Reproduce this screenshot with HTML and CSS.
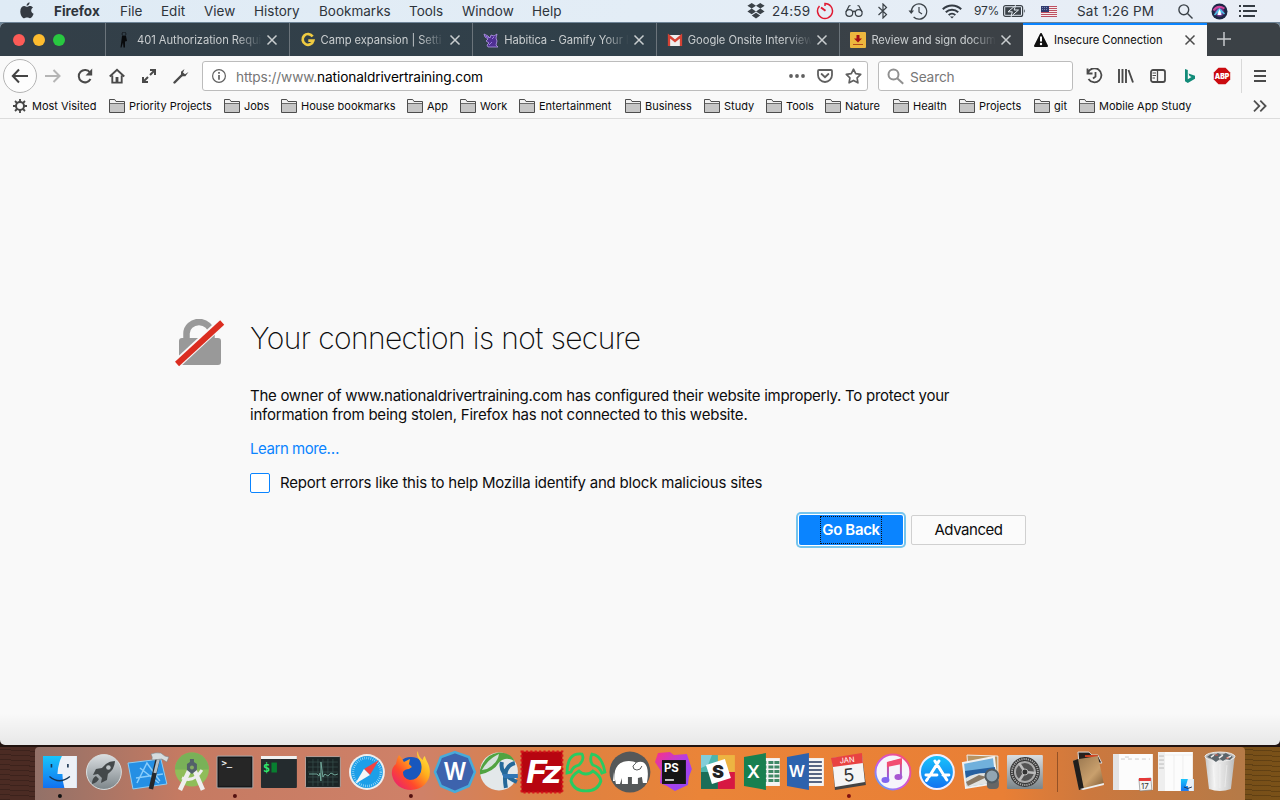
FILE: index.html
```html
<!DOCTYPE html>
<html lang="en">
<head>
<meta charset="utf-8">
<title>Insecure Connection</title>
<link rel="stylesheet" href="styles.css">
</head>
<body>
<svg width="0" height="0" class="defs" aria-hidden="true">
  <defs>
    <symbol id="close" viewBox="0 0 12 12"><path d="M1.5 1.5l9 9M10.5 1.5l-9 9" fill="none" stroke="currentColor" stroke-width="1.5"/></symbol>
    <symbol id="folder" viewBox="0 0 16 14"><path d="M.5 13.5V.5h5.2l1.3 2h8.500v11z" fill="#c6c6c6" stroke="#4d4d4d"/><path d="M1 1h4.400l1.300 2H15v1H1z" fill="#f1f1f1"/><path d="M1 4.500h14" fill="none" stroke="#6a6a6a"/></symbol>
    <linearGradient id="blueV" x2="0" y2="1"><stop stop-color="#18c5fb"/><stop offset="1" stop-color="#1271f0"/></linearGradient>
    <linearGradient id="silver" x2="0" y2="1"><stop stop-color="#d9dde0"/><stop offset="1" stop-color="#7c8589"/></linearGradient>
    <linearGradient id="fox" x1="1" x2="0" y2="1"><stop stop-color="#fff24a"/><stop offset=".35" stop-color="#ffb01c"/><stop offset=".65" stop-color="#ff4a2b"/><stop offset="1" stop-color="#e31587"/></linearGradient>
    <linearGradient id="note" x2="0" y2="1"><stop stop-color="#fb4568"/><stop offset="1" stop-color="#7d62f6"/></linearGradient>
    <linearGradient id="ring" x1="1" x2="0" y2="1"><stop stop-color="#ff4b66"/><stop offset=".6" stop-color="#c65bea"/><stop offset="1" stop-color="#41b5ff"/></linearGradient>
    <linearGradient id="storm" x2="1" y2="1"><stop stop-color="#fc3183"/><stop offset=".5" stop-color="#b23ee8"/><stop offset="1" stop-color="#8b49f8"/></linearGradient>
    <linearGradient id="leather" x2="1" y2="1"><stop stop-color="#93714b"/><stop offset=".6" stop-color="#c9a06d"/><stop offset="1" stop-color="#79542f"/></linearGradient>
    <linearGradient id="bin" x2="1"><stop stop-color="#c8c8c8"/><stop offset=".3" stop-color="#f2f2f2"/><stop offset=".7" stop-color="#dadada"/><stop offset="1" stop-color="#b9b9b9"/></linearGradient>
    <radialGradient id="siri"><stop stop-color="#fff"/><stop offset=".3" stop-color="#62bbea"/><stop offset=".6" stop-color="#7c3f9e"/><stop offset="1" stop-color="#17263e"/></radialGradient>
  </defs>
</svg>

<header class="menubar">
  <svg class="apple" viewBox="0 0 14 17"><path d="M9.600.300c.100 1.800-1.300 3.500-3 3.500C6.400 2.200 7.900.500 9.600.300zM7 4.800c.800 0 1.500-.800 3-.800 1.300 0 2.400.700 3 1.600-2.700 1.700-2.200 5.100.600 6.200-.6 1.900-2.100 4.400-3.600 4.400-1.100 0-1.500-.700-2.900-.700s-1.900.700-2.900.700C2.400 16.200.300 12.900.300 9.400c0-3.600 2.100-5.400 4-5.400 1.200 0 2 .800 2.700.800z" fill="#343a42"/></svg>
  <nav class="menus"><b>Firefox</b><span>File</span><span>Edit</span><span>View</span><span>History</span><span>Bookmarks</span><span>Tools</span><span>Window</span><span>Help</span></nav>
  <div class="status">
    <svg width="18" height="16" viewBox="0 0 18 16" fill="#3b4248"><path d="M4.700 0L9 2.800 4.700 5.600.4 2.800zM13.300 0l4.300 2.800-4.300 2.800L9 2.800zM4.700 5.600L9 8.400l-4.300 2.800L.4 8.400zM13.300 5.600l4.300 2.800-4.300 2.800L9 8.400zM9 9.700l4.200 2.800L9 15.500l-4.200-3z"/></svg>
    <span class="timer">24:59</span>
    <svg width="18" height="18" viewBox="0 0 18 18" fill="none" stroke="#e01932" stroke-width="1.500"><path d="M9 4V1.500A7.500 7.500 0 1 1 3.500 3.900"/><path d="M5 5.500l4.500 3.300" stroke-width="2"/></svg>
    <svg width="18" height="14" viewBox="0 0 18 14" fill="none" stroke="#3b4248" stroke-width="1.200"><circle cx="4.300" cy="9" r="3.400"/><circle cx="13.700" cy="9" r="3.400"/><path d="M7.500 8q1.500-1.500 3 0M1 8l3-6 1.500-.500M17 8l-3-6-1.500-.500"/></svg>
    <svg width="12" height="16" viewBox="0 0 12 16" fill="none" stroke="#3b4248" stroke-width="1.200"><path d="M1.500 4l8 7.500L6 15V1l3.500 3.500L1.500 12"/></svg>
    <svg width="20" height="17" viewBox="0 0 20 17" fill="none" stroke="#3b4248" stroke-width="1.200"><path d="M3.300 8.500a7.700 7.700 0 1 1 2.300 5.500M11 4v5l3 2"/><path d="M.5 7.500h5.500L3.200 11z" fill="#3b4248" stroke="none"/></svg>
    <svg width="20" height="15" viewBox="0 0 20 15" fill="none" stroke="#343b43" stroke-width="2"><path d="M.8 5.200a13 13 0 0 1 18.400 0M3.800 8.300a8.800 8.800 0 0 1 12.400 0M6.700 11.100a4.700 4.700 0 0 1 6.600 0"/><path d="M8 12.500h4l-2 2z" fill="#343b43" stroke="none"/></svg>
    <span class="percent">97%</span>
    <svg width="23" height="12" viewBox="0 0 23 12"><rect x=".6" y=".6" width="19" height="10.800" rx="2" fill="none" stroke="#3b4248" stroke-width="1.200"/><rect x="2.200" y="2.200" width="15.800" height="7.600" fill="#3b4248"/><path d="M21 4q1.800 2 0 4" fill="#3b4248"/><path d="M12.500.5L5 6.800h4.300L8 11.500 15.500 5h-4.300z" fill="#3b4248" stroke="#e8eff6"/></svg>
    <svg width="16" height="11" viewBox="0 0 16 11"><path fill="#f4eef0" d="M0 0h16v11H0z"/><path d="M0 .5h16M0 2.500h16M0 4.500h16M0 6.500h16M0 8.500h16M0 10.500h16" stroke="#bd5162"/><path fill="#303b70" d="M0 0h8v6H0z"/><path d="M1 1.500h6M1 3.500h6" stroke="#8089ad" stroke-dasharray="1 1"/></svg>
    <span class="clock">Sat 1:26 PM</span>
    <svg width="15" height="15" viewBox="0 0 15 15" fill="none" stroke="#3b4248" stroke-width="1.400"><circle cx="5.800" cy="5.800" r="4.900"/><path d="M9.500 9.500l5 5"/></svg>
    <svg width="17" height="17" viewBox="0 0 17 17"><circle cx="8.500" cy="8.500" r="8" fill="#1c2746"/><circle cx="8.500" cy="9" r="5.500" fill="url(#siri)"/><path d="M2.500 7.500q4-6 11-2" fill="none" stroke="#d0459d" stroke-width="2"/><path d="M3.500 12l5-6 5 5" fill="none" stroke="#4cc6ea" stroke-width="1.500"/><path d="M8.500 6l2 6h-4z" fill="#fff"/></svg>
    <svg width="18" height="12" viewBox="0 0 18 12" stroke="#343b43" stroke-width="2"><path d="M0 1h2M4 1h12M0 6h2M4 6h14M0 11h2M4 11h12"/></svg>
  </div>
</header>

<main class="window">
  <div class="tabs">
    <div class="lights"><i class="red"></i><i class="amber"></i><i class="green"></i></div>
    <div class="tab"><svg class="fav" viewBox="0 0 16 16"><circle cx="8" cy="2" r="2" fill="none" stroke="#161c21"/><path d="M6 4h4l1 5-2 .5v6H7.500l-.5-5-1.500 5H4.500z" fill="#080a0c"/></svg><span class="label">401 Authorization Requi</span><svg class="x"><use href="#close"/></svg></div>
    <div class="tab"><svg class="fav" viewBox="0 0 16 16"><path d="M12.600 4.500A5.400 5.400 0 1 0 13.300 8.700H8.300" fill="none" stroke="#efcb42" stroke-width="2.700"/></svg><span class="label">Camp expansion | Setti</span><svg class="x"><use href="#close"/></svg></div>
    <div class="tab"><svg class="fav" viewBox="0 0 16 16"><path d="M1 2l4 2 2 2 1-3 3 1 3-2-1 4 1 3-1 4 2 2H5l-1-2 2-2-3-2 2-2-3-2z" fill="#4f3093" stroke="#b59be8" stroke-width=".8"/><path d="M2.500 4l3.500 2M6 13l3-3M9 7l2-2" stroke="#9d7be0"/></svg><span class="label">Habitica - Gamify Your l</span><svg class="x"><use href="#close"/></svg></div>
    <div class="tab"><svg class="fav" viewBox="0 0 16 16"><path fill="#eee" d="M1 3h14v11H1z"/><path d="M2 14V4l6 5 6-5v10" fill="none" stroke="#d54234" stroke-width="2.300"/></svg><span class="label">Google Onsite Interview</span><svg class="x"><use href="#close"/></svg></div>
    <div class="tab"><svg class="fav" viewBox="0 0 16 16"><rect width="16" height="16" rx="1" fill="#edb73e"/><path d="M6.500 3h3v3.500H12L8 10.500l-4-4h2.500z" fill="#a40f16"/><path d="M3 12.500h10" stroke="#b34b1d" stroke-width="1"/></svg><span class="label">Review and sign docum</span><svg class="x"><use href="#close"/></svg></div>
    <div class="tab active"><svg class="fav" viewBox="0 0 16 16"><path d="M8 2l6 12H2z" fill="#111" stroke="#111" stroke-width="2" stroke-linejoin="round"/><path d="M8 4.500v5" stroke="#fff" stroke-width="2"/><circle cx="8" cy="12" r="1.200" fill="#fff"/></svg><span class="label">Insecure Connection</span><svg class="x"><use href="#close"/></svg></div>
    <svg class="plus" viewBox="0 0 14 14"><path d="M7 0v14M0 7h14" stroke="#c6c9cc" stroke-width="1.500"/></svg>
  </div>

  <div class="toolbar">
    <div class="back"><svg width="18" height="16" viewBox="0 0 18 16" fill="none" stroke="#444" stroke-width="2"><path d="M17 8H2M8 1.500L1.800 8 8 14.500"/></svg></div>
    <div class="tools-left">
      <svg width="16" height="14" viewBox="0 0 16 14" fill="none" stroke="#b5b5b5" stroke-width="2"><path d="M0 7h14M8.500 1l6 6-6 6"/></svg>
      <svg width="16" height="16" viewBox="0 0 16 16" fill="none" stroke="#4a4a4a" stroke-width="2"><path d="M13 4.500A6.200 6.200 0 1 0 13.500 11"/><path d="M15.200.5v7H8.500z" fill="#4a4a4a" stroke="none"/></svg>
      <svg width="16" height="16" viewBox="0 0 17 16" fill="none" stroke="#4a4a4a" stroke-width="2"><path d="M.8 8.500l7.700-7 7.700 7M3.500 7.500V15h10V7.500"/><path d="M7 9h3v6H7z" fill="#4a4a4a" stroke="none"/></svg>
      <svg width="16" height="16" viewBox="0 0 16 16" fill="none" stroke="#4a4a4a" stroke-width="2"><path d="M9 7l5-5M7 9l-5 5M9 2h5v5M2 9v5h5"/></svg>
      <svg width="16" height="16" viewBox="0 0 16 16"><path d="M1.500 14.500L9 7" stroke="#4a4a4a" stroke-width="2.400" stroke-linecap="round"/><path d="M11.500 1L8 3.800v4.400h4.400L15.500 4 12 6.200 10 4.500z" fill="#4a4a4a"/></svg>
    </div>
    <div class="urlbar">
      <svg width="14" height="14" viewBox="0 0 14 14" fill="none" stroke="#606060"><circle cx="7" cy="7" r="6.400" stroke-width="1.200"/><path d="M7 6v4.700M7 3v1.700" stroke-width="1.700"/></svg>
      <span class="url"><span>https://www.</span>nationaldrivertraining.com</span>
      <svg width="16" height="4" viewBox="0 0 16 4" fill="#606060"><circle cx="2" cy="2" r="1.900"/><circle cx="8" cy="2" r="1.900"/><circle cx="14" cy="2" r="1.900"/></svg>
      <svg width="16" height="14" viewBox="0 0 16 14" fill="none" stroke="#606060" stroke-width="1.800"><path d="M2 1h12q1 0 1 1v4a7 7 0 0 1-14 0V2q0-1 1-1z"/><path d="M4.600 5L8 8.200 11.400 5" stroke-linecap="round"/></svg>
      <svg width="17" height="16" viewBox="0 0 17 16" fill="none" stroke="#606060" stroke-width="1.700" stroke-linejoin="round"><path d="M8.500 1.200l2.200 4.500 5 .7-3.600 3.400.8 5-4.400-2.400-4.400 2.400.8-5L1.300 6.400l5-.7z"/></svg>
    </div>
    <div class="searchbar"><svg width="17" height="17" viewBox="0 0 17 17" fill="none" stroke="#909090" stroke-width="2"><circle cx="6.500" cy="6.500" r="5"/><path d="M10.200 10.200l6 5.500"/></svg><span>Search</span></div>
    <div class="tools-right">
      <svg width="17" height="16" viewBox="0 0 17 16" fill="none" stroke="#4a4a4a" stroke-width="1.800"><path d="M2 4.500A7 7 0 1 1 2.500 11M9.500 4v4.500L7 10.500M1.500.500v5h5"/></svg>
      <svg width="16" height="14" viewBox="0 0 16 14" stroke="#4a4a4a" stroke-width="1.900"><path d="M1 0v14M4.500 0v14M8 0v14M10.500 1l4.500 12.500"/></svg>
      <svg width="16" height="14" viewBox="0 0 16 14" fill="none" stroke="#4a4a4a" stroke-width="1.800"><rect x="1" y="1" width="14" height="12" rx="2"/><path d="M7.500 1v12" stroke-width="1.300"/><path d="M2.500 4h3.500M2.500 6.500h3.500M2.500 9h2.500" stroke-width="1"/></svg>
      <svg width="12" height="14" viewBox="0 0 12 14" fill="#128b79"><path d="M1 0l2.800 1v9.300L7.500 8 5.500 7 4.500 4.400 11 6.700v3L3.800 14 1 12.300z"/></svg>
      <svg class="abp" width="18" height="18" viewBox="0 0 18 18"><path d="M5.500.8h7l4.700 4.700v7l-4.700 4.700h-7L.8 12.500v-7z" fill="#cb0b10"/><text x="9" y="11.700" font-size="7.400" font-weight="900" textLength="14.500" lengthAdjust="spacingAndGlyphs" text-anchor="middle" fill="#fff">ABP</text></svg>
      <i class="rule"></i>
      <svg width="12" height="12" viewBox="0 0 12 12" stroke="#4a4a4a" stroke-width="2"><path d="M0 1h12M0 6h12M0 11h12"/></svg>
    </div>
  </div>

  <div class="bookmarks">
    <span><svg class="gear" viewBox="0 0 16 16" fill="none" stroke="#474747"><circle cx="8" cy="8" r="4" stroke-width="2"/><path d="M8 1v3M8 12v3M1 8h3M12 8h3M3 3l2 2M11 11l2 2M13 3l-2 2M5 11l-2 2" stroke-width="1.800"/></svg>Most Visited</span>
    <span><svg><use href="#folder"/></svg>Priority Projects</span><span><svg><use href="#folder"/></svg>Jobs</span><span><svg><use href="#folder"/></svg>House bookmarks</span><span><svg><use href="#folder"/></svg>App</span><span><svg><use href="#folder"/></svg>Work</span><span><svg><use href="#folder"/></svg>Entertainment</span><span><svg><use href="#folder"/></svg>Business</span><span><svg><use href="#folder"/></svg>Study</span><span><svg><use href="#folder"/></svg>Tools</span><span><svg><use href="#folder"/></svg>Nature</span><span><svg><use href="#folder"/></svg>Health</span><span><svg><use href="#folder"/></svg>Projects</span><span><svg><use href="#folder"/></svg>git</span><span><svg><use href="#folder"/></svg>Mobile App Study</span>
    <svg class="more" viewBox="0 0 14 12" fill="none" stroke="#505050" stroke-width="1.800"><path d="M1 .7L6.300 6 1 11.300M7.300.7L12.600 6l-5.300 5.300"/></svg>
  </div>

  <section class="page">
    <svg class="lock" viewBox="0 0 50 50"><path d="M11.500 21v-6.500a12.500 11.500 0 0 1 25 0V21" fill="none" stroke="#999" stroke-width="6.500"/><rect x="4" y="19" width="42" height="27" rx="3" fill="#999"/><path d="M0 46.500L48 2" stroke="#f9f9f9" stroke-width="9"/><path d="M2 45L47.200 3.500" stroke="#db2d20" stroke-width="6"/></svg>
    <div class="message">
      <h1>Your connection is not secure</h1>
      <p class="copy"><span>The owner of www.nationaldrivertraining.com has configured their website improperly. To protect your</span><br>information from being stolen, Firefox has not connected to this website.</p>
      <a class="learn">Learn more…</a>
      <label class="report"><i></i>Report errors like this to help Mozilla identify and block malicious sites</label>
      <div class="actions"><button class="primary"><span>Go Back</span></button><button class="secondary">Advanced</button></div>
    </div>
  </section>
</main>

<footer class="desktop">
  <div class="dock">
    <svg viewBox="0 0 44 50"><path fill="url(#blueV)" d="M5 6h34v32H5z"/><path d="M24 6q-4 8-4.500 18h5q0 8 2 14H39V6z" fill="#edf1f7"/><path d="M13.500 14v3.500M30 14v3.500" stroke="#16334f" stroke-width="1.600"/><path d="M11.500 26.500q10 8.500 20.500 0" fill="none" stroke="#16334f" stroke-width="1.300"/><circle cx="22" cy="46" r="2" fill="#111"/></svg>
    <svg viewBox="0 0 44 50"><circle cx="22" cy="22" r="17.500" fill="url(#silver)" stroke="#d9dedf"/><path d="M33 11q-8 0-13 7l-6 1-3 6 5-1 4 4-1 5 6-3 1-6q7-5 7-13zM14 26q-4 2-4 8 5-1 7-5z" fill="#43484a"/><circle cx="26.500" cy="17.500" r="2.300" fill="#bdc3c6"/></svg>
    <svg viewBox="0 0 44 50"><path d="M2 13l33-4 6 25-34 5z" fill="#258fe4" stroke="#8bcdf5"/><path d="M11 33l10-20 13 18M10 28l27-4M14 18l19 15" fill="none" stroke="#89cdfb" stroke-width="1.500"/><path d="M32 8l-7 31" stroke="#24282d" stroke-width="4.500"/><path d="M33 7l-4 16" stroke="#b4bec5" stroke-width="3"/><path d="M25 4q5-2 10-1l4 3 4 1-2 5-5-3-10 1q1-3-1-6z" fill="#d5dcdf" stroke="#7a8388" stroke-width=".6"/></svg>
    <svg viewBox="0 0 44 50"><circle cx="22" cy="19.500" r="17" fill="#8fbd59"/><path d="M5 19.500a17 17 0 0 1 34 0z" fill="#79b158"/><path d="M20 19L10 40M24 19l9 21" stroke="#eee" stroke-width="4.500"/><path d="M12 28q12 5 20-8" fill="none" stroke="#eee" stroke-width="3"/><path d="M20 9h4v3l3 2v6l-5 4-5-4v-6l3-2z" fill="#53616a"/><circle cx="22" cy="17.500" r="2" fill="#87aa62"/></svg>
    <svg viewBox="0 0 44 50"><rect x="4" y="6" width="36" height="32" rx="1" fill="#17191b" stroke="#a9a9a9"/><rect x="6" y="8" width="32" height="28" fill="#262626"/><text x="8.500" y="16" class="mono" font-size="9" font-weight="700" fill="#eee">&gt;_</text><circle cx="22" cy="46" r="2" fill="#54100f"/></svg>
    <svg viewBox="0 0 44 50"><rect x="4" y="6" width="36" height="32" rx="1" fill="#242b2e"/><path d="M4 6h36v3H4z" fill="#f1f1f1"/><text x="6" y="22" class="mono" font-size="12" font-weight="700" fill="#30e96c">$</text><path fill="#087f30" d="M14.500 12.500h5.500v10h-5.500z"/></svg>
    <svg viewBox="0 0 44 50"><rect x="4.500" y="6.500" width="35" height="31" rx="1" fill="#1b2526" stroke="#b7a09a"/><path d="M7 12h30M7 17h30M7 22h30M7 27h30M7 32h30M12 9v27M17 9v27M22 9v27M27 9v27M32 9v27" stroke="#38504e" stroke-width=".7"/><path d="M8 24h8l2 2 1-3 1 8V12l2 15 2-3 3 2 3-3 4 2 3-1" fill="none" stroke="#71a99b"/></svg>
    <svg viewBox="0 0 44 50"><circle cx="22" cy="22" r="18" fill="#eee"/><circle cx="22" cy="22" r="16" fill="#1d9fe8"/><circle cx="22" cy="22" r="14" fill="none" stroke="#b5e4fa" stroke-width="2.500" stroke-dasharray=".6 1.500"/><path d="M34 10L19 19l6 6z" fill="#f34242"/><path d="M10 34l9-15 6 6z" fill="#f5f5f5"/></svg>
    <svg viewBox="0 0 44 50"><circle cx="22" cy="22" r="15" fill="#1857bd"/><path d="M29 1q-2 4 1 8 4 5 2 13-3 8-11 8-7-1-7-8 2-3 6-3l3-2-3-3 1-5-6 3q-2-4-5-7-2 3-3 9Q2 18 3 25c2 10 10 15 19 15 11 0 19-8 19-18 0-8-4-11-5-16-1 1-2 2-2 4-3-2-5-5-5-9z" fill="url(#fox)"/><circle cx="22" cy="46" r="2" fill="#54100f"/></svg>
    <svg viewBox="0 0 44 50"><path d="M22 2l14 5 6 15-6 14-14 6-14-6-6-14 6-15z" fill="#3d63ad" stroke="#49abd9" stroke-width="2.500"/><text x="22" y="30.500" font-size="24" font-weight="600" textLength="23" lengthAdjust="spacingAndGlyphs" text-anchor="middle" fill="#fff">W</text></svg>
    <svg viewBox="0 0 44 50"><circle cx="22" cy="21.500" r="19" fill="#e3e8ea"/><path d="M3 20Q8 4 22 2.500q12 0 16 9-9-6-16 1-5 9-19 12z" fill="#51a341"/><path d="M22 4q-1 9-12 15l-5 1q6-11 17-16z" fill="#d5e2dc"/><path d="M25 12q-3 12 15 20M38 13q-13 3-9 25" fill="none" stroke="#25699a" stroke-width="4"/><path d="M25 24h16v4H27z" fill="#3176b4"/></svg>
    <svg viewBox="0 0 44 50"><rect x="1.500" y="1.500" width="41" height="41" fill="#b70510"/><rect x="1.500" y="1.500" width="41" height="41" fill="none" stroke="#d6151b" stroke-width="2" stroke-dasharray="2.200 2.200"/><text x="6" y="33" font-size="31" font-weight="700" font-style="italic" letter-spacing="-3" textLength="33" lengthAdjust="spacingAndGlyphs" fill="#fff">Fz</text></svg>
    <svg viewBox="0 0 44 50" fill="none" stroke="#28cb61" stroke-width="2.800"><path d="M15 21q-7 4-8 10 3 10 15 10t15-10q-1-6-8-10-3 3-7 3t-7-3zM3 23C3 9 8 3 18 4q3 5-3 11-6 1-8 7zM28 4q10 1 13 18l-3 1q-2-6-9-8-4-5-1-11z"/></svg>
    <svg viewBox="0 0 44 50"><circle cx="22" cy="22" r="20.500" fill="#555859"/><path d="M8 34q-2-7-1-13 3-10 14-10 5 0 7 2 8-4 11 4 2 6 0 16h-4l-1-6-4 1v6h-6v-7h-4v7h-6v-6l-2 6zM6 22l-1 9h2z" fill="#fff"/><path d="M28 13l-3 3q0 4 4 4t5-4" fill="none" stroke="#555859"/></svg>
    <svg viewBox="0 0 44 50"><path d="M6 3l12-1 4 3 13-1 3 9 2 6-3 8-1 8-13 6-8-5-7-3 1-12-6-9z" fill="url(#storm)"/><path fill="#151515" d="M10 10h24v24H10z"/><text x="12" y="22" font-size="11.500" font-weight="700" fill="#fff">PS</text><path d="M13 30h9" stroke="#fff" stroke-width="1.500"/></svg>
    <svg viewBox="0 0 44 50"><path d="M5 5h17v17H5z" fill="#4cb5ad"/><path d="M22 5h17v17H22z" fill="#edb442"/><path d="M5 22h17v17H5z" fill="#1a6e58"/><path d="M22 22h17v17H22z" fill="#d71842"/><path d="M5 5h11l-4 10-7 3z" fill="#82cdd9"/><path d="M10 15l19-6 6 19-19 6z" fill="#fff"/><text x="22" y="28" font-size="18" font-weight="900" text-anchor="middle" fill="#222">S</text></svg>
    <svg viewBox="0 0 44 50"><path d="M20 8h20v28H20z" fill="#f4f4f4"/><path d="M24 11v22M31 11v22M37 11v22" stroke="#3e8865" stroke-width="5" stroke-dasharray="3 1.500"/><path d="M4 7l22-4v37L4 36z" fill="#178050"/><text x="13.500" y="28" font-size="18" font-weight="600" text-anchor="middle" fill="#fff">X</text></svg>
    <svg viewBox="0 0 44 50"><path d="M20 8h20v28H20z" fill="#f4f4f4"/><path d="M24 12h14M24 16h14M24 20h14M24 24h14M24 28h14M24 32h14" stroke="#566583" stroke-width="2"/><path d="M3 7l22-4v37L3 36z" fill="#2d62ad"/><text x="13" y="27" font-size="16" font-weight="600" text-anchor="middle" fill="#fff">W</text></svg>
    <svg viewBox="0 0 44 50"><path d="M5 8l30-4 4 31-31 5z" fill="#444"/><path d="M5 8l30-4 3 28-30 5z" fill="#f5f5f5"/><path d="M4 8l31-5 1 10-30 4z" fill="#e94242"/><text transform="translate(13 13.500) rotate(-6)" font-size="7.500" fill="#fff">JAN</text><text transform="translate(17 32) rotate(-6)" font-size="18" fill="#333">5</text><circle cx="22" cy="46" r="2" fill="#801010"/></svg>
    <svg viewBox="0 0 44 50"><circle cx="22" cy="22" r="17.500" fill="#f6f5fb" stroke="url(#ring)" stroke-width="2"/><path d="M17 30V13l13-3v17" fill="none" stroke="url(#note)" stroke-width="2"/><path d="M16 12l15-4v6l-15 3z" fill="#f24e72"/><ellipse cx="14.500" cy="30" rx="4" ry="3" fill="#8166ef"/><ellipse cx="27.500" cy="27" rx="4" ry="3" fill="#a757d2"/></svg>
    <svg viewBox="0 0 44 50"><circle cx="22" cy="22" r="17" fill="url(#blueV)" stroke="#eef" stroke-width="2"/><path d="M20 11l12 19M24 11L14 27M11 25h11M28 25h6M12.500 29l-1 1.500" fill="none" stroke="#fff" stroke-width="3" stroke-linecap="round"/></svg>
    <svg viewBox="0 0 44 50"><path d="M8 5l31 1v27H10z" fill="#b89462" stroke="#eee"/><path d="M4 13l31-6 3 26-31 5z" fill="#70b0dc" stroke="#f0f0f0" stroke-width="2"/><path d="M6 21l30-4 1 7-30 4z" fill="#2760a0"/><path d="M7 28q12-7 30-4l1 8-30 5z" fill="#e2e3e1"/><path d="M7 32l13-7 8 2-19 9z" fill="#887864"/><rect x="28" y="28" width="12" height="11" rx="4" fill="#666"/><circle cx="33" cy="26" r="6.500" fill="#92a5b2" stroke="#505a60" stroke-width="2"/></svg>
    <svg viewBox="0 0 44 50"><rect x="4" y="5" width="36" height="34" rx="1" fill="url(#silver)"/><circle cx="22" cy="22" r="15" fill="#373737"/><circle cx="22" cy="22" r="13" fill="none" stroke="#aaa" stroke-width="2" stroke-dasharray="1.200 1"/><circle cx="22" cy="22" r="10" fill="#545454" stroke="#aaa" stroke-width="2"/><path d="M22 22l11 1M22 22l-6-9M22 22l-6 9" stroke="#bbb" stroke-width="2.500"/><circle cx="22" cy="22" r="3" fill="#333" stroke="#bbb"/></svg>
    <i class="divider"></i>
    <svg viewBox="0 0 44 50"><path d="M11 2h11l3 3h6l4 8H12z" fill="#28201d" stroke="#ddd"/><path d="M18 6h13" stroke="#d1411f" stroke-width="2"/><path d="M6 10l25-4 6 28-25 6z" fill="url(#leather)"/><path d="M6 11l5-2 6 30-5 1z" fill="#211e1c"/><path d="M13 39l24-6v2l-21 5z" fill="#eee"/></svg>
    <svg viewBox="0 0 44 50"><path fill="#fcfcfc" d="M2 4h40v36H2z"/><path fill="#e3e3e3" d="M2 4h6v36H2z"/><path d="M10 9h29M14 7h7" stroke="#ccc" stroke-dasharray="4 3"/><path d="M28 29l12-1 1 12-12 1z" fill="#f4f4f4" stroke="#777" stroke-width=".6"/><path fill="#e53939" d="M28 28h12v3H28z"/><text x="30" y="39" font-size="8" fill="#333">17</text></svg>
    <svg viewBox="0 0 44 50"><path fill="#fcfcfc" d="M4 2h35v39H4z"/><path fill="#eee" d="M4 2h7v39H4z"/><path d="M5 6h5M5 10h5M5 14h5M5 18h5" stroke="#bbb"/><path d="M11 5h28M20 5v35M29 5v35" stroke="#eee"/><path fill="url(#blueV)" d="M27 29h13v12H27z"/><path d="M34 29l-2 7h2l1 5h5V29z" fill="#e9f0f7"/><path d="M30 37q4 3 8 0" fill="none" stroke="#235"/></svg>
    <svg viewBox="0 0 44 50"><path d="M7 5h30l-4 34q-11 4-22 0z" fill="url(#bin)"/><ellipse cx="22" cy="6.500" rx="15" ry="4.500" fill="#bbb" stroke="#eee"/><path d="M9 7l4-3 4 1 3-2 4 2 4-2 7 4-3 3-4-1-3 2-3-2-4 3-4-3z" fill="#5b656b"/><path d="M13 7l3-2M21 8l4-3M29 8l4-2" stroke="#eee" stroke-width="1.500"/><path d="M17 5h3M28 8h3" stroke="#d85a45"/><path d="M15 15l2 22M22 14v24M29 15l-2 22" stroke="#fff" stroke-opacity=".4"/></svg>
  </div>
</footer>
</body>
</html>
```

FILE: styles.css
```css
* { box-sizing: border-box; }
body {
  margin: 0;
  width: 1280px;
  height: 800px;
  overflow: hidden;
  display: flex;
  flex-direction: column;
  font-family: Inter, "Liberation Sans", sans-serif;
  background: linear-gradient(#6e8497 0 30px, #21130f 30px);
}
svg { display: block; flex: none; }
svg text { font-family: Inter, sans-serif; }
svg .mono { font-family: "DejaVu Sans Mono", monospace; }
.defs { position: absolute; }

.menubar {
  height: 22px;
  flex: none;
  display: flex;
  align-items: center;
  padding-left: 20px;
  background: linear-gradient(90deg, #dfebf5, #e3edf6 50%, #e9eef6);
  color: #2e343b;
  font-size: 13.5px;
  line-height: 22px;
  white-space: nowrap;
}
.apple { width: 14px; height: 17px; margin-right: 20px; margin-bottom: 2px; }
.menus { display: grid; grid-template-columns: 66px 41px 43px 50px 65px 90px 53px 70px 40px; }
.status {
  margin-left: 175px;
  display: grid;
  align-items: center;
  grid-template-columns: 25px 44px 29px 32px 31px 34px 32px 29px 38px 36px 101px 33px 28px 18px;
}
.timer { letter-spacing: .2px; }
.percent { font-size: 12px; letter-spacing: -.2px; }
.clock { letter-spacing: .2px; }

.window {
  margin-top: 1px;
  height: 722px;
  flex: none;
  display: flex;
  flex-direction: column;
  border-radius: 5px;
  overflow: hidden;
  background: #f9f9f9;
}
.tabs { height: 33px; flex: none; display: flex; background: linear-gradient(90deg, #333f48, #30404a 50%, #3c4146 70%, #3b4146); }
.lights { width: 105px; display: flex; align-items: center; gap: 8px; padding: 1px 0 0 13px; }
.lights i { width: 12px; height: 12px; border-radius: 50%; }
.red { background: #fc5b57; }
.amber { background: #fdbc2f; }
.green { background: #28c840; }
.tab {
  width: 183.6px;
  flex: none;
  display: flex;
  align-items: center;
  padding: 1px 11px 0 10px;
  border-left: 1px solid #6b747b;
  color: #c9cdcf;
}
.fav { width: 16px; height: 16px; margin-right: 5px; }
.label {
  flex: 1;
  min-width: 0;
  overflow: hidden;
  white-space: nowrap;
  font-size: 11.2px;
  letter-spacing: -.05px;
  -webkit-mask-image: linear-gradient(90deg, #000 80%, transparent);
  mask-image: linear-gradient(90deg, #000 80%, transparent);
}
.x { width: 12px; height: 12px; margin-left: 4px; }
.tab.active { background: #f9f9f9; color: #0c0c0d; border-left: 0; border-top: 2px solid #0a84ff; padding: 0 11px 1px 10px; }
.tab.active .label { -webkit-mask-image: none; mask-image: none; }
.tab.active .x { color: #4c4c4c; }
.plus { width: 14px; height: 14px; margin: 9px 0 0 10px; }

.toolbar { height: 40px; flex: none; display: flex; align-items: center; padding-left: 3px; }
.back { width: 34px; height: 34px; border: 1px solid #b4b4b4; border-radius: 50%; background: #fdfdfd; display: flex; align-items: center; justify-content: center; flex: none; }
.tools-left { display: flex; align-items: center; gap: 16px; margin-left: 8px; width: 157px; flex: none; }
.urlbar, .searchbar { height: 30px; flex: none; border: 1px solid #bcbcbc; border-radius: 3px; background: #fff; display: flex; align-items: center; font-size: 13.7px; }
.urlbar { width: 666px; padding: 0 5px 0 9px; gap: 12px; }
.url { flex: 1; margin-left: -2px; letter-spacing: -.13px; padding-top: 2px; }
.url span { color: #767676; }
.searchbar { width: 195px; margin-left: 10px; padding-left: 8px; color: #777; gap: 6px; letter-spacing: -.15px; }
.searchbar span { padding-top: 2px; }
.tools-right { display: grid; grid-template-columns: 32px 32px 34px 29px 28px 13px 12px; align-items: center; margin-left: 13px; }
.rule { width: 1px; height: 34px; background: #d9d9d9; }

.bookmarks {
  height: 23px;
  flex: none;
  border-bottom: 1px solid #dcdcdc;
  padding: 0 0 2px 12px;
  display: grid;
  grid-template-columns: 97px 115px 57px 126px 53px 59px 106px 79px 62px 59px 68px 66px 75px 45px 174px 14px;
  align-items: center;
  font-size: 11px;
  letter-spacing: 0;
  color: #0c0c0d;
  white-space: nowrap;
}
.bookmarks span { display: flex; align-items: center; }
.bookmarks span svg { width: 16px; height: 14px; margin-right: 4px; }
.bookmarks span .gear { width: 16px; height: 16px; }
.more { width: 14px; height: 12px; }

.page {
  flex: 1;
  display: flex;
  padding: 198px 0 0 175px;
  color: #0c0c0d;
  font-size: 15px;
  background: linear-gradient(transparent calc(100% - 32px), #00000012);
}
.lock { width: 50px; height: 50px; margin-right: 25px; margin-top: 2px; }
.message { width: 776px; }
h1 { margin: 0; font-size: 30px; line-height: 42px; font-weight: 200; letter-spacing: -.6px; white-space: nowrap; }
.copy { margin: 27px 0 0; line-height: 19px; letter-spacing: -.21px; white-space: nowrap; }
.copy span { letter-spacing: -.275px; }
.learn { display: block; margin-top: 15px; line-height: 19px; letter-spacing: -.45px; color: #0a84ff; }
.report { display: flex; align-items: center; gap: 10px; margin-top: 15px; height: 20px; line-height: 18px; letter-spacing: -.205px; white-space: nowrap; }
.report i { width: 20px; height: 20px; border: 1px solid #0a84ff; border-radius: 2px; background: #fff; }
.actions { display: flex; justify-content: flex-end; gap: 8px; margin-top: 22px; }
button { height: 30px; padding: 0 0 2px; font: 15px Inter, sans-serif; border-radius: 2px; }
.primary { width: 104px; border: 0; padding: 0; background: #0a84ff; color: #fff; font-weight: 600; letter-spacing: -.35px; box-shadow: 0 0 0 1px #fff, 0 0 0 3px #75c4ee; }
.primary span { display: inline-block; height: 28px; line-height: 25px; padding: 0 1px; border: 1px dotted #111; }
.secondary { width: 115px; border: 1px solid #d0d0d0; background: #fbfbfb; color: #0c0c0d; letter-spacing: -.45px; }

.desktop {
  height: 55px;
  flex: none;
  padding: 2px 35px 0;
  background: linear-gradient(#21130f 0 2px, transparent 2px), repeating-linear-gradient(3deg, #0003 0 1px, transparent 1px 5px), linear-gradient(90deg, #4b2b23, #4b2b23 50%, #7a5118);
}
.dock {
  height: 53px;
  display: flex;
  padding: 3px 0 0 3px;
  border-radius: 4px 4px 0 0;
  background: linear-gradient(90deg, #927168, #c57a62 12%, #cf8168 32%, #de8141 43%, #ea8438 55%, #e97f35 80%, #cc783e 87%, #b57a47);
}
.dock svg { width: 43.87px; height: 50px; }
.divider { width: 1px; height: 40px; margin: 2px 9px 0 10px; background: #945126; }
```
